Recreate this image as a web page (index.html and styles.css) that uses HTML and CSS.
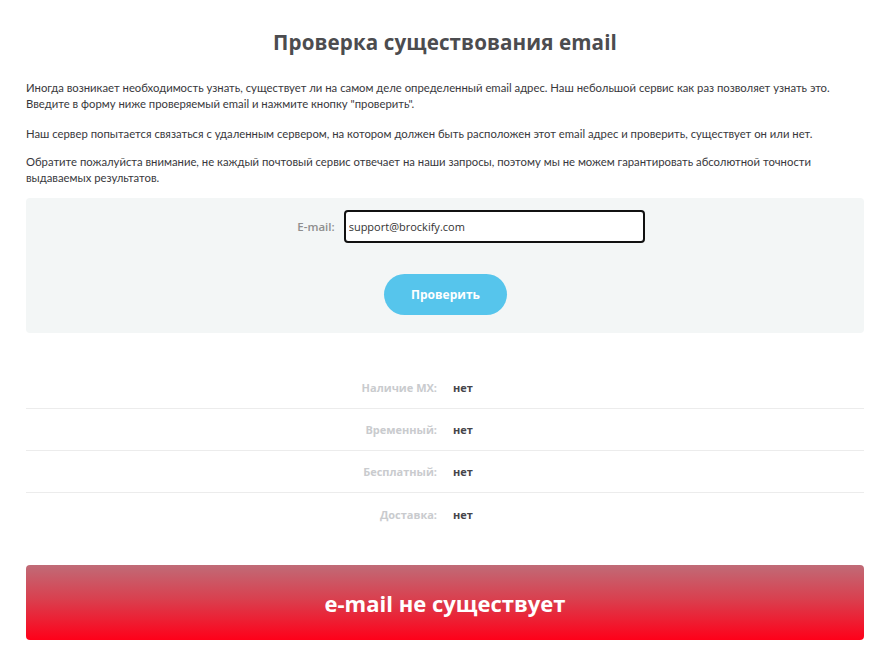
FILE: index.html
```html
<!DOCTYPE html>
<html lang="ru">
<head>
<meta charset="utf-8">
<title>Проверка существования email</title>
<link rel="stylesheet" href="styles.css">
</head>
<body>
<div class="page">
  <h1 class="title">Проверка существования email</h1>
  <div class="intro">
    <p class="intro-first">Иногда возникает необходимость узнать, существует ли на самом деле определенный email адрес. Наш небольшой сервис как раз позволяет узнать это. Введите в форму ниже проверяемый email и нажмите кнопку "проверить".</p>
    <p>Наш сервер попытается связаться с удаленным сервером, на котором должен быть расположен этот email адрес и проверить, существует он или нет.</p>
    <p>Обратите пожалуйста внимание, не каждый почтовый сервис отвечает на наши запросы, поэтому мы не можем гарантировать абсолютной точности выдаваемых результатов.</p>
  </div>
  <form class="check-form">
    <div class="field">
      <label class="field-label" for="email">E-mail:</label>
      <input class="field-input" id="email" type="text" value="support@brockify.com">
    </div>
    <button class="btn-check" type="button">Проверить</button>
  </form>
  <div class="results">
    <div class="row"><span class="row-label">Наличие MX:</span><span class="row-value">нет</span></div>
    <div class="row"><span class="row-label">Временный:</span><span class="row-value">нет</span></div>
    <div class="row"><span class="row-label">Бесплатный:</span><span class="row-value">нет</span></div>
    <div class="row"><span class="row-label">Доставка:</span><span class="row-value">нет</span></div>
  </div>
  <div class="verdict">e-mail не существует</div>
</div>
</body>
</html>
```

FILE: styles.css
```css
* { box-sizing: border-box; }
body {
  margin: 0;
  background: #fff;
  font-family: "Lato", "Open Sans", sans-serif;
  color: #3a3a3a;
}
.page {
  padding: 0 25px 0 26px;
}
.title {
  margin: 0;
  padding-top: 30px;
  height: 70px;
  text-align: center;
  font-family: "Open Sans", sans-serif;
  font-weight: 700;
  font-size: 20.6px;
  line-height: 24px;
  color: #4c4c4f;
  letter-spacing: 0.1px;
}
.intro {
  padding-top: 10px;
}
.intro p {
  margin: 0 0 12px;
  font-size: 11.3px;
  line-height: 16px;
  color: #38383c;
}
.intro .intro-first {
  margin-bottom: 14px;
}
.check-form {
  margin-top: 5px;
  background: #f3f6f6;
  border-radius: 4px;
  height: 135px;
  padding-top: 12px;
  display: flex;
  flex-direction: column;
  align-items: center;
}
.field {
  display: flex;
  align-items: center;
  gap: 9px;
  margin-left: 52px;
}
.field-label {
  font-family: "Open Sans", sans-serif;
  font-weight: 600;
  font-size: 11.5px;
  color: #8e8e8e;
}
.field-input {
  width: 301px;
  height: 33px;
  border: 2px solid #111;
  border-radius: 4px;
  padding: 0 3px;
  font-family: "Open Sans", sans-serif;
  font-size: 11px;
  color: #333;
  background: #fff;
  outline: none;
}
.btn-check {
  margin-top: 31px;
  margin-left: 1px;
  width: 123px;
  height: 41px;
  border: none;
  border-radius: 21px;
  background: #56c5ec;
  color: #fff;
  font-family: "Open Sans", sans-serif;
  font-weight: 700;
  font-size: 12px;
  cursor: pointer;
}
.results {
  margin-top: 34px;
}
.row {
  display: flex;
  align-items: center;
  height: 42px;
  padding-bottom: 1px;
  border-bottom: 1px solid #ececec;
  font-family: "Open Sans", sans-serif;
  font-weight: 700;
  font-size: 11px;
}
.row:last-child {
  border-bottom: none;
  height: 44px;
}
.row-label {
  width: 411px;
  text-align: right;
  color: #c9cbce;
}
.row-value {
  margin-left: 16px;
  color: #45454a;
}
.verdict {
  margin-top: 28px;
  height: 75px;
  border-radius: 4px;
  background: linear-gradient(to bottom, #c06b77 0%, #d9404f 45%, #ff0019 100%);
  color: #fff;
  display: flex;
  align-items: center;
  justify-content: center;
  font-family: "Open Sans", sans-serif;
  font-weight: 700;
  font-size: 22px;
}
```
